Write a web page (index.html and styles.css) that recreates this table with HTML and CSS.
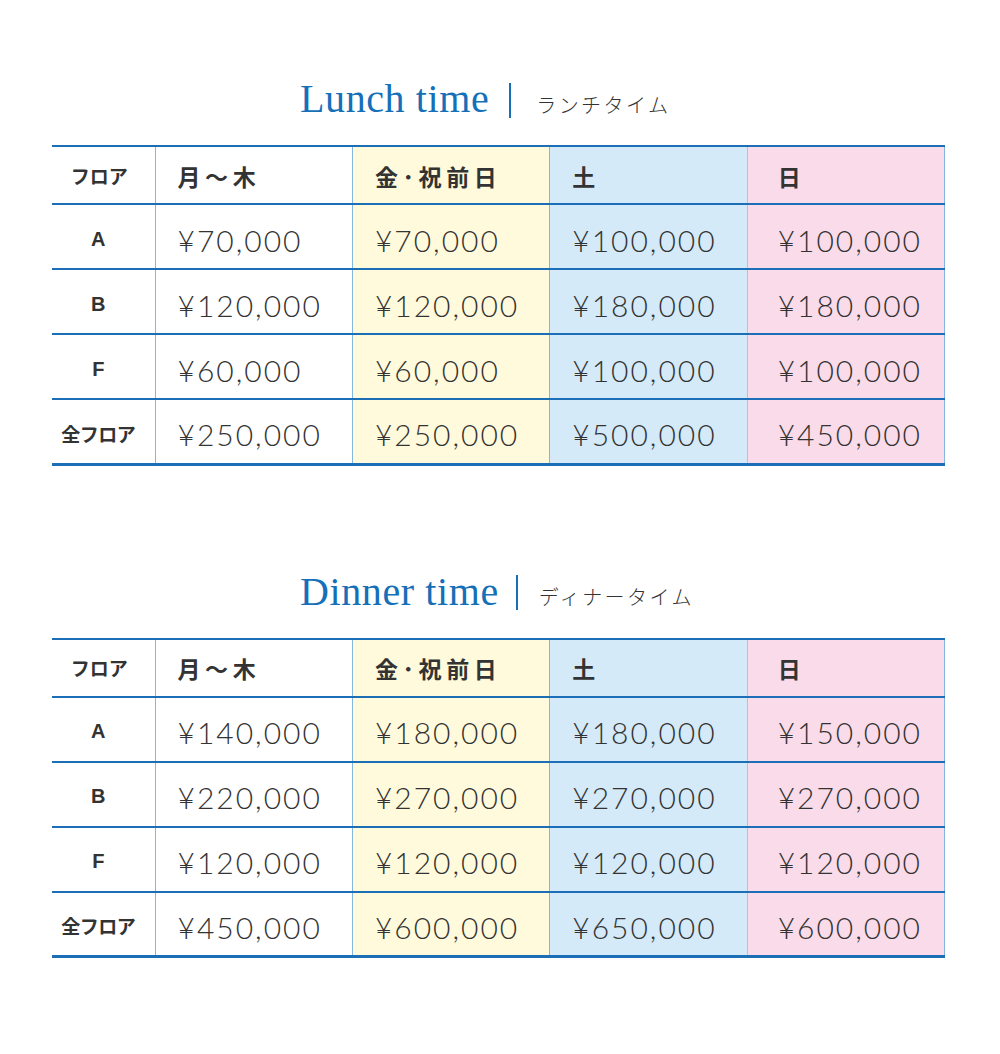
FILE: index.html
```html
<!DOCTYPE html>
<html lang="ja">
<head>
<meta charset="utf-8">
<title>Price</title>
<link rel="stylesheet" href="styles.css">
</head>
<body>
<main class="page">
  <section class="block">
    <h2 class="title"><span class="en">Lunch time</span><span class="bar"></span><span class="ja">ランチタイム</span></h2>
    <table class="price">
      <thead>
        <tr><th class="floor">フロア</th><th class="c1">月～木</th><th class="c2">金･祝前日</th><th class="c3">土</th><th class="c4">日</th></tr>
      </thead>
      <tbody>
        <tr><th class="floor">A</th><td class="c1">¥70,000</td><td class="c2">¥70,000</td><td class="c3">¥100,000</td><td class="c4">¥100,000</td></tr>
        <tr><th class="floor">B</th><td class="c1">¥120,000</td><td class="c2">¥120,000</td><td class="c3">¥180,000</td><td class="c4">¥180,000</td></tr>
        <tr><th class="floor">F</th><td class="c1">¥60,000</td><td class="c2">¥60,000</td><td class="c3">¥100,000</td><td class="c4">¥100,000</td></tr>
        <tr class="last"><th class="floor">全フロア</th><td class="c1">¥250,000</td><td class="c2">¥250,000</td><td class="c3">¥500,000</td><td class="c4">¥450,000</td></tr>
      </tbody>
    </table>
  </section>
  <section class="block">
    <h2 class="title title--dinner"><span class="en">Dinner time</span><span class="bar"></span><span class="ja">ディナータイム</span></h2>
    <table class="price">
      <thead>
        <tr><th class="floor">フロア</th><th class="c1">月～木</th><th class="c2">金･祝前日</th><th class="c3">土</th><th class="c4">日</th></tr>
      </thead>
      <tbody>
        <tr><th class="floor">A</th><td class="c1">¥140,000</td><td class="c2">¥180,000</td><td class="c3">¥180,000</td><td class="c4">¥150,000</td></tr>
        <tr><th class="floor">B</th><td class="c1">¥220,000</td><td class="c2">¥270,000</td><td class="c3">¥270,000</td><td class="c4">¥270,000</td></tr>
        <tr><th class="floor">F</th><td class="c1">¥120,000</td><td class="c2">¥120,000</td><td class="c3">¥120,000</td><td class="c4">¥120,000</td></tr>
        <tr class="last"><th class="floor">全フロア</th><td class="c1">¥450,000</td><td class="c2">¥600,000</td><td class="c3">¥650,000</td><td class="c4">¥600,000</td></tr>
      </tbody>
    </table>
  </section>
</main>
</body>
</html>
```

FILE: styles.css
```css
html, body {
  margin: 0;
  padding: 0;
  background: #ffffff;
}

.page {
  width: 893px;
  margin: 0 0 0 52px;
  padding: 72px 0 0 0;
  display: flex;
  flex-direction: column;
  gap: 99px;
}

.block {
  display: flex;
  flex-direction: column;
}

.title {
  margin: 0 0 19px 0;
  padding-left: 248px;
  height: 54px;
  display: flex;
  align-items: center;
  font-weight: normal;
}

.title .en {
  font-family: "Liberation Serif", "DejaVu Serif", serif;
  font-size: 40px;
  line-height: 1;
  color: #1570b8;
  letter-spacing: 0.6px;
}

.title .bar {
  display: block;
  width: 2px;
  height: 35px;
  background: #1570b8;
  margin: 0 25px 0 20px;
  position: relative;
  top: 1px;
}

.title--dinner .bar {
  margin: 0 21px 0 17px;
}

.title .ja {
  font-family: "Noto Sans CJK JP", sans-serif;
  font-size: 20px;
  font-weight: 300;
  color: #333333;
  letter-spacing: 2.4px;
  position: relative;
  top: 5px;
}

.price {
  width: 893px;
  border-collapse: collapse;
  table-layout: fixed;
  font-family: "Noto Sans CJK JP", sans-serif;
  color: #333333;
}

.price th,
.price td {
  border-top: 2px solid #1c6fb6;
  border-bottom: 2px solid #1c6fb6;
  border-left: 1px solid #85b6df;
  border-right: 1px solid #85b6df;
  padding: 0 0 0 22px;
  text-align: left;
  height: 65px;
  line-height: 1;
  box-sizing: border-box;
}

.price thead th {
  height: 58px;
  font-size: 23px;
  font-weight: bold;
  letter-spacing: 4.6px;
  padding-top: 2px;
}

.price .floor {
  width: 103px;
  padding: 4px 10px 0 0;
  text-align: center;
  border-left: none;
  font-size: 19px;
  font-weight: bold;
  letter-spacing: 0;
}

.price thead .floor {
  font-size: 19px;
  letter-spacing: 0;
  padding: 0 8px 0 0;
}

.price tbody .floor {
  font-family: "Liberation Sans", "Noto Sans CJK JP", sans-serif;
  font-size: 20px;
}

.price tr.last .floor {
  font-family: "Noto Sans CJK JP", sans-serif;
  font-size: 19px;
  letter-spacing: -0.5px;
}

.price td {
  font-family: "Lato", "Noto Sans CJK JP", sans-serif;
  font-weight: 300;
  font-size: 30px;
  letter-spacing: 2px;
  padding-top: 6px;
}

.price tr.last th,
.price tr.last td {
  border-bottom: 3px solid #1c6fb6;
}

.price .c2 { background: #fffadb; }
.price .c3 { background: #d4eaf8; border-right-color: #b7bfe0; }
.price .c4 { background: #fadbe9; padding-left: 30px; border-left-color: #b7bfe0; }
```
